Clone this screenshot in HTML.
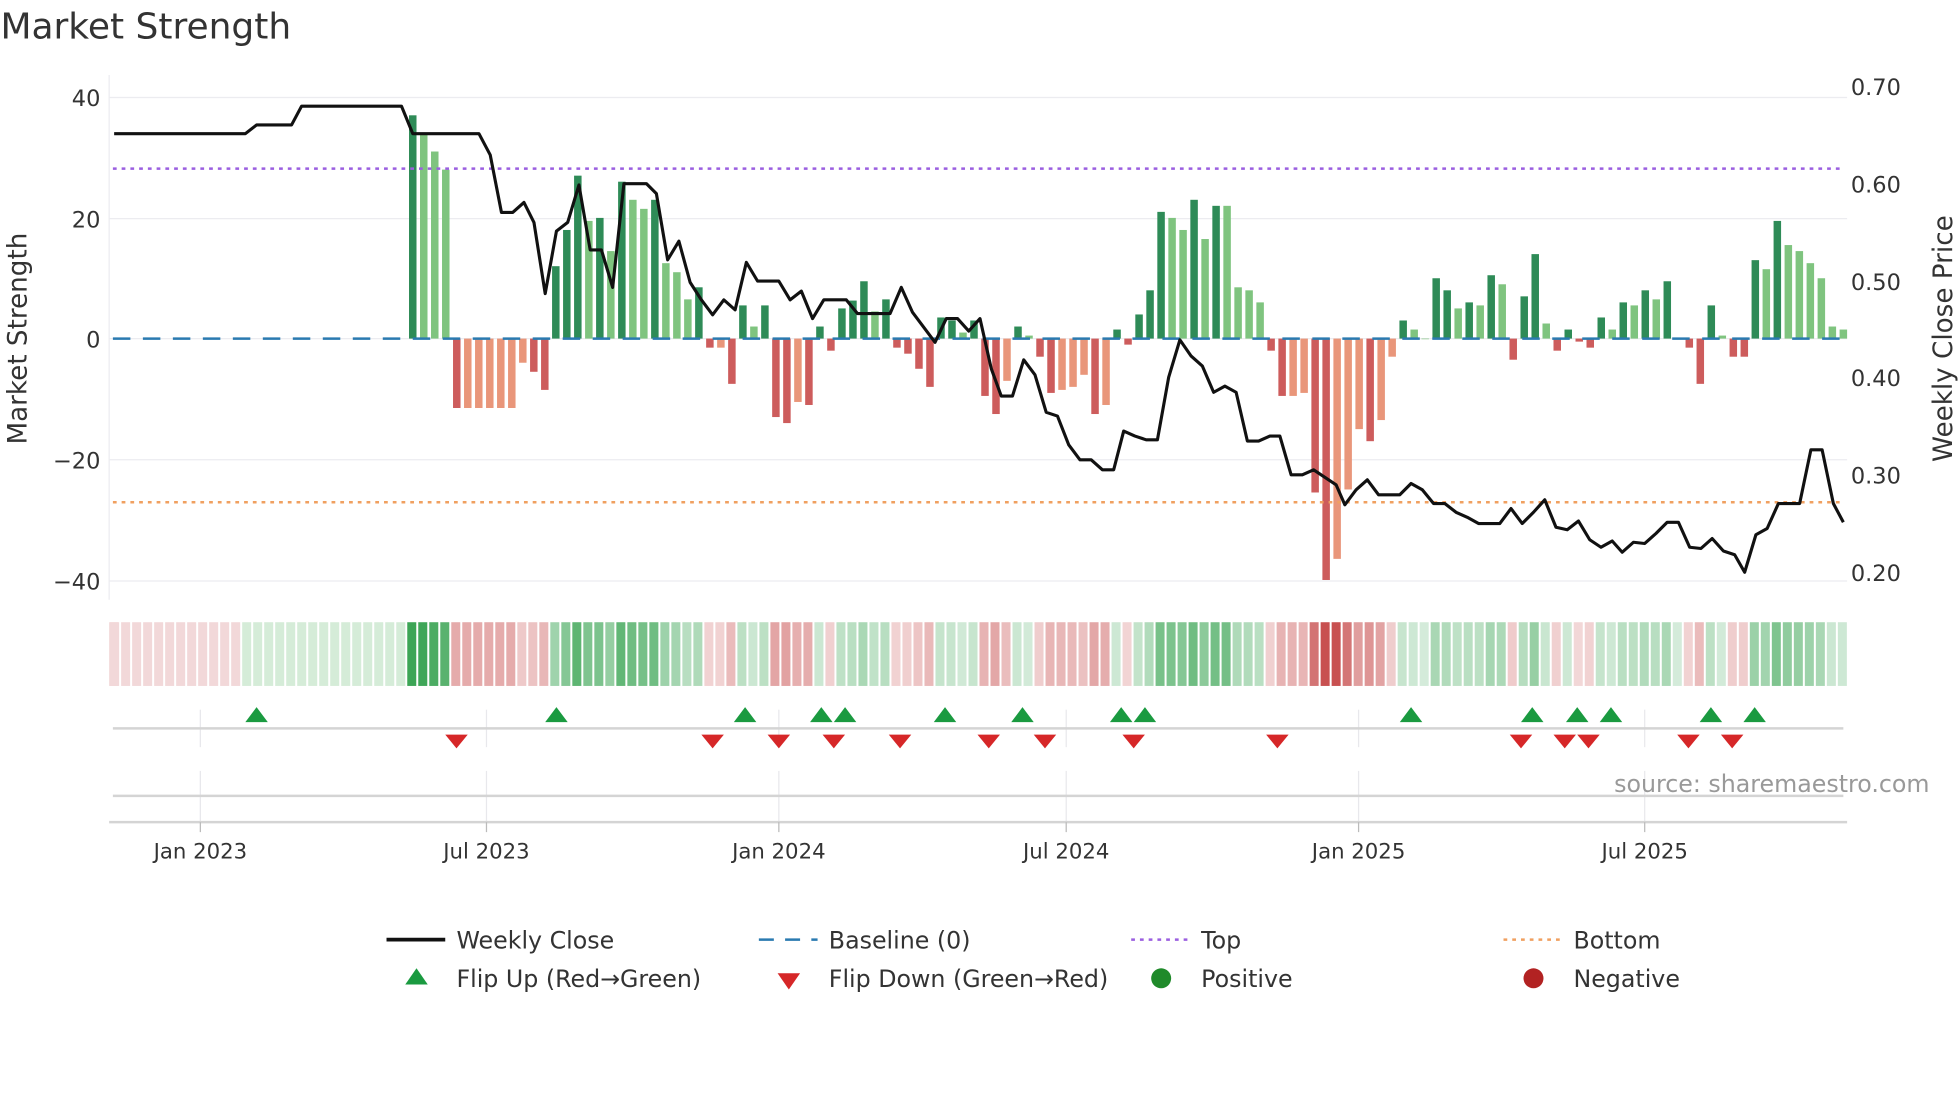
<!DOCTYPE html>
<html><head><meta charset="utf-8"><style>
html,body{margin:0;padding:0;background:#fff;width:1960px;height:1102px;overflow:hidden}
svg{display:block;font-family:"DejaVu Sans","Liberation Sans",sans-serif}
</style></head><body>
<svg id="s" width="1960" height="1102" viewBox="0 0 1568 882" xmlns="http://www.w3.org/2000/svg">
<rect width="1568" height="882" fill="#fff"/>
<text x="0" y="31" font-size="28.8" fill="#333">Market Strength</text>
<g stroke="#ececf0" stroke-width="1">
<line x1="87" y1="78" x2="1478" y2="78"/><line x1="87" y1="175" x2="1478" y2="175"/>
<line x1="87" y1="271" x2="1478" y2="271"/><line x1="87" y1="368" x2="1478" y2="368"/>
<line x1="87" y1="465" x2="1478" y2="465"/><line x1="87" y1="60" x2="87" y2="480"/>
</g>
<g font-size="18" fill="#333" text-anchor="end">
<text x="80" y="85">40</text><text x="80" y="182">20</text><text x="80" y="278">0</text>
<text x="80" y="375">−20</text><text x="80" y="472">−40</text>
</g>
<g font-size="18" fill="#333">
<text x="1481" y="76">0.70</text><text x="1481" y="154">0.60</text><text x="1481" y="232">0.50</text>
<text x="1481" y="309">0.40</text><text x="1481" y="387">0.30</text><text x="1481" y="465">0.20</text>
</g>
<text transform="translate(21,271) rotate(-90)" font-size="21" fill="#333" text-anchor="middle">Market Strength</text>
<text transform="translate(1562,271) rotate(-90)" font-size="21" fill="#333" text-anchor="middle">Weekly Close Price</text>
<g id="bars"></g>
<line x1="90" y1="271" x2="1476" y2="271" stroke="#2a7ab0" stroke-width="2" stroke-dasharray="14,10"/>
<line x1="90" y1="135" x2="1476" y2="135" stroke="#9b5fe0" stroke-width="2" stroke-dasharray="3,4"/>
<line x1="90" y1="402" x2="1476" y2="402" stroke="#f0a060" stroke-width="2" stroke-dasharray="3,4"/>
<polyline fill="none" stroke="#111" stroke-width="2.5" stroke-linejoin="round" points="91,107 196,107 205,100 233,100 241,85 321,85 330,107 383,107 392,124 401,170 410,170 419,162 427,178 436,235 445,185 454,178 463,148 472,200 481,200 490,230 499,147 517,147 525,155 534,208 543,193 552,226 561,240 570,252 579,240 588,248 597,210 606,225 623,225 632,240 641,233 650,255 659,240 677,240 686,251 712,251 721,230 730,250 748,274 757,255 766,255 775,265 784,255 793,295 801,317 810,317 819,288 828,300 837,330 846,333 855,356 864,368 873,368 882,376 891,376 899,345 908,349 917,352 926,352 935,302 944,272 953,285 962,293 971,314 980,309 989,314 998,353 1007,353 1016,349 1024,349 1033,380 1042,380 1051,376 1060,382 1069,388 1076,404 1085,392 1094,384 1103,396 1120,396 1129,387 1138,392 1147,403 1156,403 1165,410 1174,414 1183,419 1200,419 1209,407 1218,419 1227,410 1236,400 1245,422 1254,424 1263,417 1272,432 1281,438 1290,433 1298,442 1307,434 1316,435 1325,427 1334,418 1343,418 1352,438 1361,439 1370,431 1379,441 1388,444 1396,458 1405,428 1414,423 1423,403 1432,403 1440,403 1449,360 1458,360 1467,403 1475,418"/>
<g id="heat"></g>
<g stroke="#e8e8ec"><line x1="160" y1="568" x2="160" y2="598"/><line x1="389" y1="568" x2="389" y2="598"/><line x1="623" y1="568" x2="623" y2="598"/><line x1="853" y1="568" x2="853" y2="598"/><line x1="1087" y1="568" x2="1087" y2="598"/><line x1="1316" y1="568" x2="1316" y2="598"/>
<line x1="160" y1="617" x2="160" y2="658"/><line x1="389" y1="617" x2="389" y2="658"/><line x1="623" y1="617" x2="623" y2="658"/><line x1="853" y1="617" x2="853" y2="658"/><line x1="1087" y1="617" x2="1087" y2="658"/><line x1="1316" y1="617" x2="1316" y2="658"/></g>
<line x1="90" y1="583" x2="1475" y2="583" stroke="#d4d4d4" stroke-width="2"/>
<line x1="90" y1="637" x2="1475" y2="637" stroke="#d4d4d4" stroke-width="2"/>
<line x1="87" y1="658" x2="1478" y2="658" stroke="#d4d4d4" stroke-width="2"/>
<g stroke="#bbb"><line x1="160" y1="658" x2="160" y2="666"/><line x1="389" y1="658" x2="389" y2="666"/><line x1="623" y1="658" x2="623" y2="666"/><line x1="853" y1="658" x2="853" y2="666"/><line x1="1087" y1="658" x2="1087" y2="666"/><line x1="1316" y1="658" x2="1316" y2="666"/></g>
<g id="mk"></g>
<text x="1544" y="634" font-size="19" fill="#999" text-anchor="end">source: sharemaestro.com</text>
<g font-size="17" fill="#333" text-anchor="middle">
<text x="160" y="687">Jan 2023</text><text x="389" y="687">Jul 2023</text><text x="623" y="687">Jan 2024</text>
<text x="853" y="687">Jul 2024</text><text x="1087" y="687">Jan 2025</text><text x="1316" y="687">Jul 2025</text>
</g>
<g font-size="19" fill="#333">
<line x1="309" y1="752" x2="356" y2="752" stroke="#111" stroke-width="3"/>
<text x="365" y="759">Weekly Close</text>
<line x1="607" y1="752" x2="654" y2="752" stroke="#2a7ab0" stroke-width="2" stroke-dasharray="12,9"/>
<text x="663" y="759">Baseline (0)</text>
<line x1="905" y1="752" x2="950" y2="752" stroke="#9b5fe0" stroke-width="2" stroke-dasharray="3,4"/>
<text x="961" y="759">Top</text>
<line x1="1203" y1="752" x2="1248" y2="752" stroke="#f0a060" stroke-width="2" stroke-dasharray="3,4"/>
<text x="1259" y="759">Bottom</text>
<polygon points="333,775 342,788 324,788" fill="#1a9a40"/>
<text x="365" y="790">Flip Up (Red→Green)</text>
<polygon points="622,779 640,779 631,792" fill="#d62728"/>
<text x="663" y="790">Flip Down (Green→Red)</text>
<circle cx="929" cy="783" r="8" fill="#1f8a2a"/>
<text x="961" y="790">Positive</text>
<circle cx="1227" cy="783" r="8" fill="#b22222"/>
<text x="1259" y="790">Negative</text>
</g>
</svg>
<script>
var NS="http://www.w3.org/2000/svg";
function el(p,t,a){var e=document.createElementNS(NS,t);for(var k in a)e.setAttribute(k,a[k]);p.appendChild(e);return e;}
var d=[[37,1],[34,0],[31,0],[28,0],[-11.5,1],[-11.5,0],[-11.5,0],[-11.5,0],[-11.5,0],[-11.5,0],[-4,0],[-5.5,1],[-8.5,1],[12,1],[18,1],[27,1],[19.5,0],[20,1],[14.5,0],[26,1],[23,0],[21.5,0],[23,1],[12.5,0],[11,0],[6.5,0],[8.5,1],[-1.5,1],[-1.5,0],[-7.5,1],[5.5,1],[2,0],[5.5,1],[-13,1],[-14,1],[-10.5,0],[-11,1],[2,1],[-2,1],[5,1],[6.3,1],[9.5,1],[4.5,0],[6.5,1],[-1.5,1],[-2.5,1],[-5,1],[-8,1],[3.5,1],[3,1],[1,0],[3,1],[-9.5,1],[-12.5,1],[-7,0],[2,1],[0.5,0],[-3,1],[-9,1],[-8.5,0],[-8,0],[-6,0],[-12.5,1],[-11,0],[1.5,1],[-1,1],[4,1],[8,1],[21,1],[20,0],[18,0],[23,1],[16.5,0],[22,1],[22,0],[8.5,0],[8,0],[6,0],[-2,1],[-9.5,1],[-9.5,0],[-9,0],[-25.5,1],[-40,1],[-36.5,0],[-25,0],[-15,0],[-17,1],[-13.5,0],[-3,0],[3,1],[1.5,0],[0,0],[10,1],[8,1],[5,0],[6,1],[5.5,0],[10.5,1],[9,0],[-3.5,1],[7,1],[14,1],[2.5,0],[-2,1],[1.5,1],[-0.5,1],[-1.5,1],[3.5,1],[1.5,0],[6,1],[5.5,0],[8,1],[6.5,0],[9.5,1],[0,0],[-1.5,1],[-7.5,1],[5.5,1],[0.5,0],[-3,1],[-3,1],[13,1],[11.5,0],[19.5,1],[15.5,0],[14.5,0],[12.5,0],[10,0],[2,0],[1.5,0]];
var bars=document.getElementById('bars'),n=d.length,x0=330,x1=1475,st=(x1-x0)/(n-1);
d.forEach(function(v,i){var x=x0+i*st,h=Math.abs(v[0])*4.83,y=v[0]>=0?271-h:271;
var c=v[0]>=0?(v[1]?'#2e8b57':'#7fc47f'):(v[1]?'#cd5c5c':'#e9967a');
el(bars,'rect',{x:x-3,y:y,width:6,height:Math.max(h,0.5),fill:c});});
var heat=document.getElementById('heat');
var pre=Math.round((x0-87)/st);
for(var i=-pre;i<n;i++){var x=x0+i*st-st/2,c;
if(i<0){c=(i<-pre+13)?'#f2d8d9':'#d5ecd8';}
else{var v=d[i][0],a=Math.min(1,0.22+Math.abs(v)/40*0.9);
c=v>=0?'rgba(60,165,85,'+a+')':'rgba(200,80,80,'+a+')';}
var xx=Math.max(x,87);el(heat,'rect',{x:xx,y:498,width:st-1.6,height:51,fill:c});}
var mk=document.getElementById('mk');
[205,445,596,657,676,756,818,897,916,1129,1226,1262,1289,1369,1404].forEach(function(x){el(mk,'polygon',{points:(x)+',566 '+(x+9)+',578 '+(x-9)+',578',fill:'#1a9a40'});});
[365,570,623,667,720,791,836,907,1022,1217,1252,1271,1351,1386].forEach(function(x){el(mk,'polygon',{points:(x-9)+',588 '+(x+9)+',588 '+x+',599',fill:'#d62728'});});
</script>
</body></html>
